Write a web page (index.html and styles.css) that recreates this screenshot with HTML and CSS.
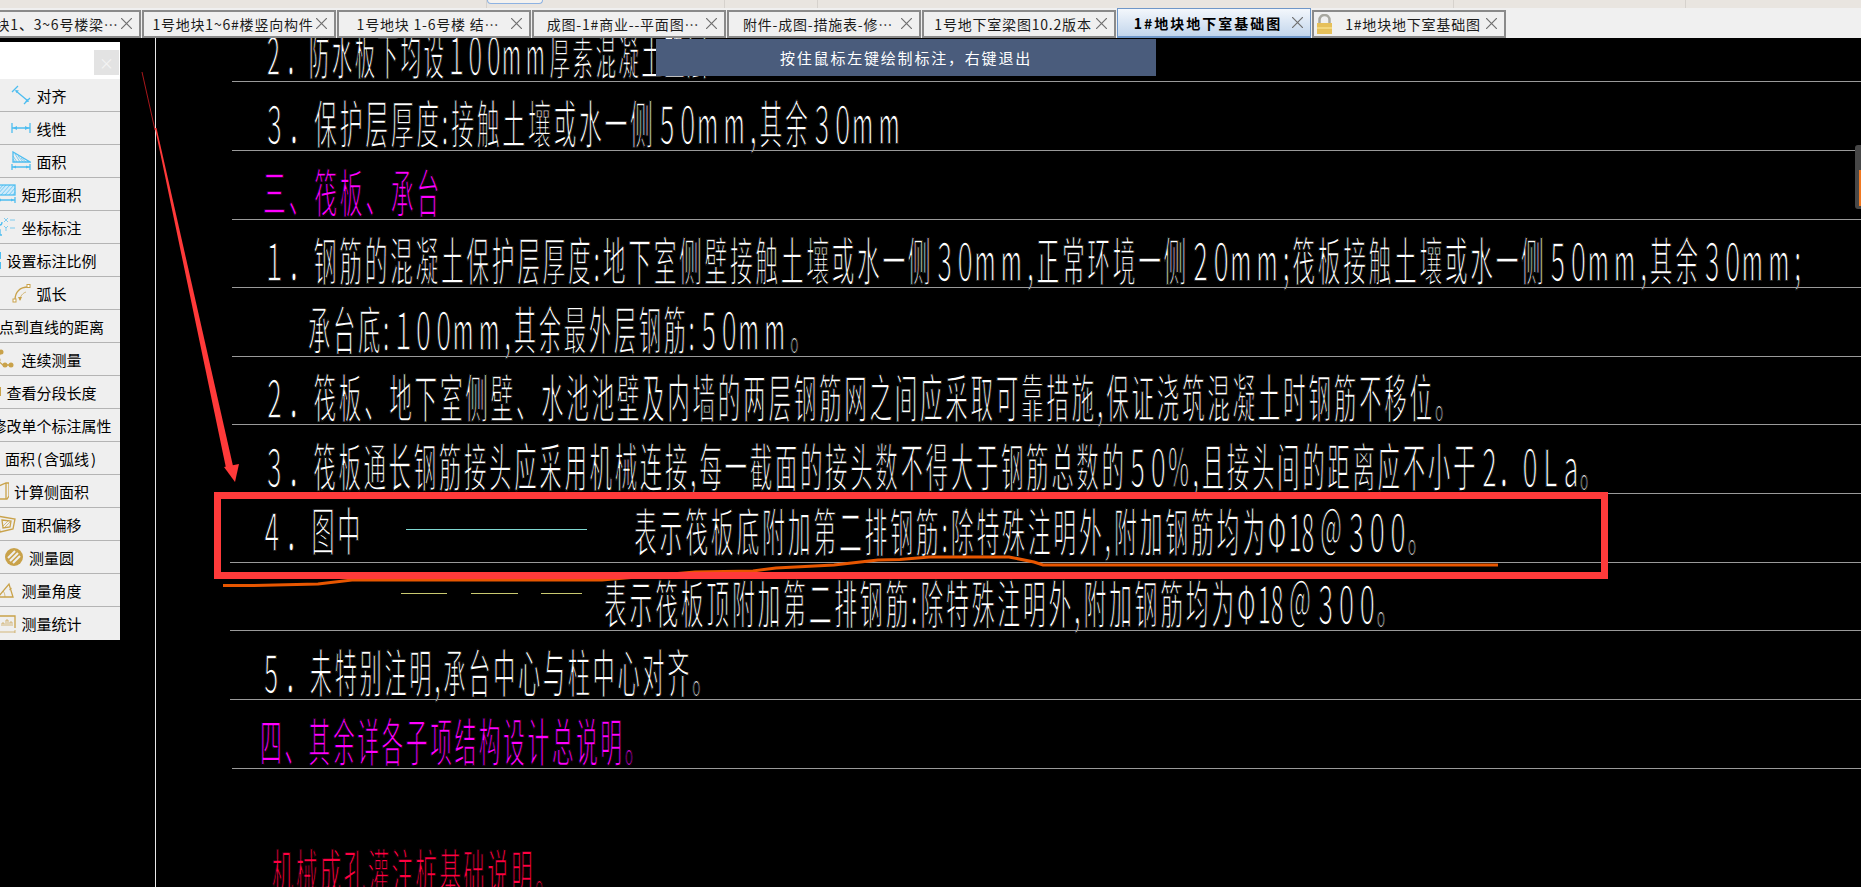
FILE: index.html
```html
<!DOCTYPE html>
<html lang="zh-CN">
<head>
    <meta charset="UTF-8" />
    <title>1#地块地下室基础图</title>
    <link rel="stylesheet" href="styles.css">
</head>
<body>

<div class="menu-strip">
    <span class="menu-cell cell-a"></span>
    <span class="menu-button"></span>
    <span class="menu-cell cell-b"></span>
    <span class="menu-cell cell-c"></span>
    <span class="menu-cell cell-d"></span>
    <span class="menu-cell cell-e"></span>
</div>

<div class="tab-bar">
    <div class="tab"><span class="tab-label">1号地块1、3~6号楼梁…</span><svg class="tab-close" viewBox="0 0 10 10"><path d="M0 0L10 10M10 0L0 10"/></svg></div>
    <div class="tab"><span class="tab-label">1号地块1~6#楼竖向构件</span><svg class="tab-close" viewBox="0 0 10 10"><path d="M0 0L10 10M10 0L0 10"/></svg></div>
    <div class="tab"><span class="tab-label">1号地块 1-6号楼 结…</span><svg class="tab-close" viewBox="0 0 10 10"><path d="M0 0L10 10M10 0L0 10"/></svg></div>
    <div class="tab"><span class="tab-label">成图-1#商业--平面图…</span><svg class="tab-close" viewBox="0 0 10 10"><path d="M0 0L10 10M10 0L0 10"/></svg></div>
    <div class="tab"><span class="tab-label">附件-成图-措施表-修…</span><svg class="tab-close" viewBox="0 0 10 10"><path d="M0 0L10 10M10 0L0 10"/></svg></div>
    <div class="tab"><span class="tab-label">1号地下室梁图10.2版本</span><svg class="tab-close" viewBox="0 0 10 10"><path d="M0 0L10 10M10 0L0 10"/></svg></div>
    <div class="tab tab-active"><span class="tab-label">1#地块地下室基础图</span><svg class="tab-close" viewBox="0 0 10 10"><path d="M0 0L10 10M10 0L0 10"/></svg></div>
    <div class="tab tab-locked">
        <svg class="tab-lock" viewBox="0 0 17 20">
            <path class="lock-shackle" d="M3.5 9V6a5 5 0 0 1 10 0v3"/>
            <rect class="lock-body" x="1" y="9" width="15" height="11"/>
            <rect class="lock-band" x="1" y="13" width="15" height="2"/>
        </svg>
        <span class="tab-label">1#地块地下室基础图</span><svg class="tab-close" viewBox="0 0 10 10"><path d="M0 0L10 10M10 0L0 10"/></svg>
    </div>
</div>

<div class="canvas">
    <!-- drawing uses page coordinates, hence the 38 in the viewBox -->
    <!-- tspans: fw = wide digit, dg = digit run, mm = wide unit, nr = narrow punctuation -->
    <svg class="drawing" viewBox="0 38 1861 849">
        <text class="cad white" x="263" y="75" textLength="447" lengthAdjust="spacingAndGlyphs"><tspan class="fw">2</tspan>．防水板下均设<tspan class="dg">100</tspan><tspan class="mm">mm</tspan>厚素混凝土垫层</text>
        <text class="cad white" x="263" y="144" textLength="642" lengthAdjust="spacingAndGlyphs"><tspan class="fw">3</tspan>．保护层厚度<tspan class="nr">:</tspan>接触土壤或水一侧<tspan class="dg">50</tspan><tspan class="mm">mm</tspan><tspan class="nr">,</tspan>其余<tspan class="dg">30</tspan><tspan class="mm">mm</tspan></text>
        <text class="cad magenta" x="263" y="213" textLength="179" lengthAdjust="spacingAndGlyphs">三、筏板、承台</text>
        <text class="cad white" x="263" y="281" textLength="1541" lengthAdjust="spacingAndGlyphs"><tspan class="fw">1</tspan>．钢筋的混凝土保护层厚度<tspan class="nr">:</tspan>地下室侧壁接触土壤或水一侧<tspan class="dg">30</tspan><tspan class="mm">mm</tspan><tspan class="nr">,</tspan>正常环境一侧<tspan class="dg">20</tspan><tspan class="mm">mm</tspan><tspan class="nr">;</tspan>筏板接触土壤或水一侧<tspan class="dg">50</tspan><tspan class="mm">mm</tspan><tspan class="nr">,</tspan>其余<tspan class="dg">30</tspan><tspan class="mm">mm</tspan><tspan class="nr">;</tspan></text>
        <text class="cad white" x="308" y="350" textLength="507" lengthAdjust="spacingAndGlyphs">承台底<tspan class="nr">:</tspan><tspan class="dg">100</tspan><tspan class="mm">mm</tspan><tspan class="nr">,</tspan>其余最外层钢筋<tspan class="nr">:</tspan><tspan class="dg">50</tspan><tspan class="mm">mm</tspan>。</text>
        <text class="cad white" x="263" y="418" textLength="1197" lengthAdjust="spacingAndGlyphs"><tspan class="fw">2</tspan>．筏板、地下室侧壁、水池池壁及内墙的两层钢筋网之间应采取可靠措施<tspan class="nr">,</tspan>保证浇筑混凝土时钢筋不移位。</text>
        <text class="cad white" x="263" y="487" textLength="1342" lengthAdjust="spacingAndGlyphs"><tspan class="fw">3</tspan>．筏板通长钢筋接头应采用机械连接<tspan class="nr">,</tspan>每一截面的接头数不得大于钢筋总数的<tspan class="dg">50</tspan>％<tspan class="nr">,</tspan>且接头间的距离应不小于<tspan class="dg">2.0La</tspan>。</text>
        <text class="cad white" x="260" y="551" textLength="103" lengthAdjust="spacingAndGlyphs"><tspan class="fw">4</tspan>．图中</text>
        <text class="cad white" x="634" y="552" textLength="799" lengthAdjust="spacingAndGlyphs">表示筏板底附加第二排钢筋<tspan class="nr">:</tspan>除特殊注明外<tspan class="nr">,</tspan>附加钢筋均为Φ<tspan class="tg">18 </tspan><tspan class="fw">@</tspan><tspan class="dg">300</tspan>。</text>
        <text class="cad white" x="604" y="624" textLength="798" lengthAdjust="spacingAndGlyphs">表示筏板顶附加第二排钢筋<tspan class="nr">:</tspan>除特殊注明外<tspan class="nr">,</tspan>附加钢筋均为Φ<tspan class="tg">18 </tspan><tspan class="fw">@</tspan><tspan class="dg">300</tspan>。</text>
        <text class="cad white" x="260" y="693" textLength="457" lengthAdjust="spacingAndGlyphs"><tspan class="fw">5</tspan>．未特别注明<tspan class="nr">,</tspan>承台中心与柱中心对齐。</text>
        <text class="cad magenta" x="260" y="762" textLength="389" lengthAdjust="spacingAndGlyphs">四、其余详各子项结构设计总说明。</text>
        <text class="cad crimson" x="272" y="893" textLength="287" lengthAdjust="spacingAndGlyphs">机械成孔灌注桩基础说明。</text>

        <!-- table rules -->
        <path class="rule" d="M232 81.5H1861M232 150.5H1861M232 219.5H1861M232 287.5H1861M232 356.5H1861M232 424.5H1861M232 493.5H1861M230 562.5H1861M230 630.5H1861M230 699.5H1861M232 768.5H1861"/>
        <path class="frame-line" d="M155.5 38V887"/>
        <path class="legend-cyan" d="M406 529.5H587"/>
        <path class="legend-yellow" d="M401 593.5H447M471 593.5H518M541 593.5H582"/>

        <!-- hand marks on top of the drawing -->
        <path class="mark-orange" d="M223 585.5H254L318 584L352 580H602L695 572L753 571L776 568L834 565L878 560L900 559.5L929 557H1009L1034 562L1043 565H1498"/>
        <rect class="mark-box" x="217.5" y="495.5" width="1387" height="80"/>
        <path class="mark-arrow-fade" d="M142 72L155 130"/>
        <path class="mark-arrow" d="M155 128L156.500 128L233 466L226 468Z"/>
        <path class="mark-arrow" d="M224 467L239 464L235 482Z"/>
    </svg>

    <div class="tip">按住鼠标左键绘制标注，右键退出</div>

    <div class="side-handle"><span class="side-handle-fill"></span></div>

    <div class="tool-panel">
        <div class="tool-head"><span class="tool-close">×</span></div>
        <div class="tool-list">
            <div class="tool-row"><svg class="tool-icon ic-blue" viewBox="0 0 20 20"><path d="M5 6L17 16M1 7L7 1M13 19L19 13"/><path class="solid" d="M4 5L8 5.500L5.500 8ZM18 17L14 16.500L16.500 14Z"/></svg><span>对齐</span></div>
            <div class="tool-row"><svg class="tool-icon ic-blue" viewBox="0 0 20 20"><path d="M1 5V15M19 5V15M1 10H19"/><path class="solid" d="M2 10L6 8V12ZM18 10L14 8V12Z"/></svg><span>线性</span></div>
            <div class="tool-row"><svg class="tool-icon ic-blue" viewBox="0 0 20 20"><path d="M2 1V11H19L2 1Z"/><path class="thin" d="M2 5L6 11M2 8L4 11M4 3L9 11M7 5L12 11M10 7L15 11"/><path d="M1 13V19M19 13V19M1 16H19"/><path class="solid" d="M2 16L5 14.500V17.500ZM18 16L15 14.500V17.500Z"/></svg><span>面积</span></div>
            <div class="tool-row"><svg class="tool-icon ic-blue" viewBox="0 0 20 20"><rect class="hatch" x="1" y="1" width="18" height="10"/><path class="thin" d="M1 8L7 1M1 11L10 1M5 11L14 1M9 11L18 1M13 11L19 4M17 11L19 8"/><path d="M1 13V19M19 13V19M1 16H19"/><path class="solid" d="M2 16L5 14.500V17.500ZM18 16L15 14.500V17.500Z"/></svg><span>矩形面积</span></div>
            <div class="tool-row"><svg class="tool-icon ic-blue" viewBox="0 0 20 20"><path class="thin" d="M8 1L12 5M12 1L8 5M8 9L10 11L12 9M10 11V14M14 3H19M14 11H19"/><path d="M1 13H4V18M4 8C5 8 6 7 6 5M1 13V18H6"/></svg><span>坐标标注</span></div>
            <div class="tool-row"><svg class="tool-icon ic-blue" viewBox="0 0 20 20"><path class="solid" d="M15 2H20V9H15ZM15 12H20V19H15Z"/></svg><span>设置标注比例</span></div>
            <div class="tool-row"><svg class="tool-icon ic-gold" viewBox="0 0 20 20"><path d="M4 17C4 9 9 4 17 4"/><path class="thin" d="M9 17C9 13 12 10 15 9"/><rect class="open" x="2" y="16" width="3" height="3"/><rect class="open" x="16" y="1.500" width="3" height="3"/><path class="solid" d="M7 14H11L9 18Z"/></svg><span>弧长</span></div>
            <div class="tool-row"><svg class="tool-icon ic-gold" viewBox="0 0 20 20"></svg><span>点到直线的距离</span></div>
            <div class="tool-row"><svg class="tool-icon ic-gold" viewBox="0 0 20 20"><path d="M5 3L1 11L7 16H15"/><circle class="solid" cx="5" cy="3" r="2.500"/><circle class="solid" cx="2" cy="11" r="2.500"/><circle class="solid" cx="9" cy="16" r="2.500"/><circle class="solid" cx="15" cy="16" r="2.500"/></svg><span>连续测量</span></div>
            <div class="tool-row"><svg class="tool-icon ic-gold" viewBox="0 0 20 20"><path class="solid" d="M16 5H20V14H16Z"/></svg><span>查看分段长度</span></div>
            <div class="tool-row"><svg class="tool-icon ic-gold" viewBox="0 0 20 20"></svg><span>修改单个标注属性</span></div>
            <div class="tool-row"><svg class="tool-icon ic-gold" viewBox="0 0 20 20"><path class="solid" d="M16 6C19 6 20 8 20 10C20 12 19 14 16 14Z"/></svg><span>面积<span class="paren">(</span>含弧线<span class="paren">)</span></span></div>
            <div class="tool-row"><svg class="tool-icon ic-gold" viewBox="0 0 20 20"><path d="M10 5L17 2H20V15L18 18H10ZM10 5V18M17 2V18"/></svg><span>计算侧面积</span></div>
            <div class="tool-row"><svg class="tool-icon ic-gold" viewBox="0 0 20 20"><path d="M1 2L19 5L17 15L4 18Z"/><path d="M6 6L15 7L14 13L7 14Z"/><path class="thin" d="M7 12L12 7M9 13L14 8"/></svg><span>面积偏移</span></div>
            <div class="tool-row"><svg class="tool-icon ic-gold" viewBox="0 0 20 20"><circle class="solid" cx="10" cy="10" r="9"/><path class="stripe" d="M4 11L11 4M6 14L14 6M9 16L16 9"/></svg><span>测量圆</span></div>
            <div class="tool-row"><svg class="tool-icon ic-gold" viewBox="0 0 20 20"><path d="M2 17L13 4L17 17H1"/><path class="thin" d="M9 17C9 14 8 12 7 11M13 10L16 8"/></svg><span>测量角度</span></div>
            <div class="tool-row"><svg class="tool-icon ic-gold" viewBox="0 0 20 20"><path d="M2 14V2H19V14"/><path class="thin" d="M6 12V9H8V12M10 12V6H12V12M14 12V8H16V12M1 18H19M1 16V19M19 16V19"/></svg><span>测量统计</span></div>
        </div>
    </div>
</div>

</body>
</html>
```

FILE: styles.css
```css
/* General Styling */
html, body {
    margin: 0;
    height: 100%;
}

body {
    display: flex;
    flex-direction: column;
    height: 887px;
    overflow: hidden;
    font-family: "Noto Sans CJK SC", sans-serif;
    background: #000;
}

/* Strip above the tabs */
.menu-strip {
    display: flex;
    height: 8px;
    background: #e9e5e0;
    flex-shrink: 0;
}

.menu-cell {
    border-right: 1px solid #d6d2cd;
}

.cell-a { width: 486px; }
.cell-b { width: 181px; }
.cell-c { width: 92px; }
.cell-d { width: 635px; }
.cell-e { width: 231px; }

.menu-button {
    width: 54px;
    height: 3px;
    border: 1px solid #8db2e2;
    border-top: none;
    border-radius: 0 0 5px 5px;
    background: #f4f2ef;
}

/* Tabs */
.tab-bar {
    display: flex;
    gap: 1px;
    height: 30px;
    flex-shrink: 0;
    margin-left: -53px;
    background: #f0f0f0;
}

.tab {
    display: flex;
    align-items: center;
    box-sizing: border-box;
    width: 194px;
    height: 28px;
    margin-top: 1.500px;
    padding: 0 7px 0 8px;
    border: 2px solid #8a8a8a;
    background: #f0f0f0;
    color: #1c1c1c;
    font-size: 14px;
    letter-spacing: 0.800px;
    white-space: nowrap;
}

.tab-label {
    flex: 1;
    text-align: center;
    overflow: hidden;
}

.tab-close {
    width: 11px;
    height: 11px;
    margin-left: 2px;
    flex-shrink: 0;
    fill: none;
    stroke: #707070;
    stroke-width: 1.100;
}

.tab-active {
    height: 30px;
    margin-top: 0;
    border: 1px solid #6f97c9;
    border-bottom-width: 2px;
    background: linear-gradient(#f3f7fc, #c3d6ec);
    color: #000;
    font-weight: bold;
    letter-spacing: 2px;
}

.tab-locked .tab-label {
    padding-left: 9px;
}

.tab-lock {
    width: 17px;
    height: 20px;
    margin-left: -6px;
    flex-shrink: 0;
}

.lock-shackle {
    fill: none;
    stroke: #a8a8a0;
    stroke-width: 2.500;
}

.lock-body { fill: #e6c05a; }
.lock-band { fill: #f3d77e; }

/* Drawing area */
.canvas {
    position: relative;
    flex: 1;
    background: #000;
}

.drawing {
    display: block;
    width: 1861px;
    height: 849px;
}

/* the black stroke eats into the glyphs so they read as thin CAD lines */
.cad {
    font-size: 52px;
    letter-spacing: 6px;
    stroke: #000;
    stroke-width: 1.500px;
}

/* run widths of the CAD font */
.cad .fw { font-variant-east-asian: full-width; }
.cad .dg { font-variant-east-asian: full-width; letter-spacing: -5px; }
.cad .mm { letter-spacing: 12px; }
.cad .nr { letter-spacing: 7px; }
.cad .tg { letter-spacing: 0; }

.white { fill: #fff; }
.magenta { fill: #ff00ff; }
.crimson { fill: #ff0040; }

.rule {
    fill: none;
    stroke: #9a9a9a;
    stroke-width: 1;
}

.frame-line {
    fill: none;
    stroke: #e8e8e8;
    stroke-width: 1;
}

.legend-cyan {
    fill: none;
    stroke: #7fd6d0;
    stroke-width: 1;
}

.legend-yellow {
    fill: none;
    stroke: #c9c970;
    stroke-width: 1;
}

.mark-orange {
    fill: none;
    stroke: #e85600;
    stroke-width: 3;
}

.mark-box {
    fill: none;
    stroke: #ff3a3a;
    stroke-width: 7;
}

.mark-arrow { fill: #ff3a3a; }

.mark-arrow-fade {
    fill: none;
    stroke: #a8181c;
    stroke-width: 1;
}

/* Hint over the drawing */
.tip {
    position: absolute;
    top: 1px;
    left: 656px;
    width: 500px;
    height: 37px;
    line-height: 37px;
    text-align: center;
    background: #4a5c7c;
    color: #fff;
    font-size: 15px;
    letter-spacing: 1.800px;
}

.side-handle {
    position: absolute;
    top: 107px;
    right: 0;
    box-sizing: border-box;
    width: 6px;
    height: 64px;
    padding: 25px 0 3px 4px;
    background: #474747;
    border-radius: 3px 0 0 3px;
}

.side-handle-fill {
    display: block;
    height: 100%;
    background: #f07820;
}

/* Measure tools panel */
.tool-panel {
    position: absolute;
    top: 4px;
    left: 0;
    width: 120px;
    overflow: hidden;
    background: #efefef;
}

.tool-head {
    display: flex;
    justify-content: flex-end;
    height: 37px;
    padding: 8px 1px 4px 0;
    box-sizing: border-box;
    background: #fff;
}

.tool-close {
    width: 25px;
    height: 25px;
    line-height: 25px;
    text-align: center;
    background: #e3e3e3;
    color: #f4f4f4;
    font-size: 15px;
}

.tool-list {
    width: 166px;
    margin-left: -44px;
}

.tool-row {
    display: flex;
    align-items: center;
    justify-content: center;
    gap: 5px;
    box-sizing: border-box;
    height: 33px;
    border-bottom: 1px solid #b4b4b4;
    color: #000;
    font-size: 15px;
    white-space: nowrap;
}

.tool-row:last-child { border-bottom: none; }

.paren {
    padding: 0 2px;
}

.tool-icon {
    width: 20px;
    height: 20px;
    flex-shrink: 0;
    fill: none;
    stroke-width: 1.300;
}

.ic-blue { stroke: #4dbdf0; }
.ic-gold { stroke: #c9a24a; }
.ic-blue .solid { fill: #4dbdf0; stroke: none; }
.ic-gold .solid { fill: #c9a24a; stroke: none; }
.tool-icon .thin { stroke-width: 0.700; }
.tool-icon .open { fill: #fff; stroke-width: 1; }
.tool-icon .hatch { fill: #cfeafa; }
.tool-icon .stripe { stroke: #efefef; stroke-width: 2; }
```
